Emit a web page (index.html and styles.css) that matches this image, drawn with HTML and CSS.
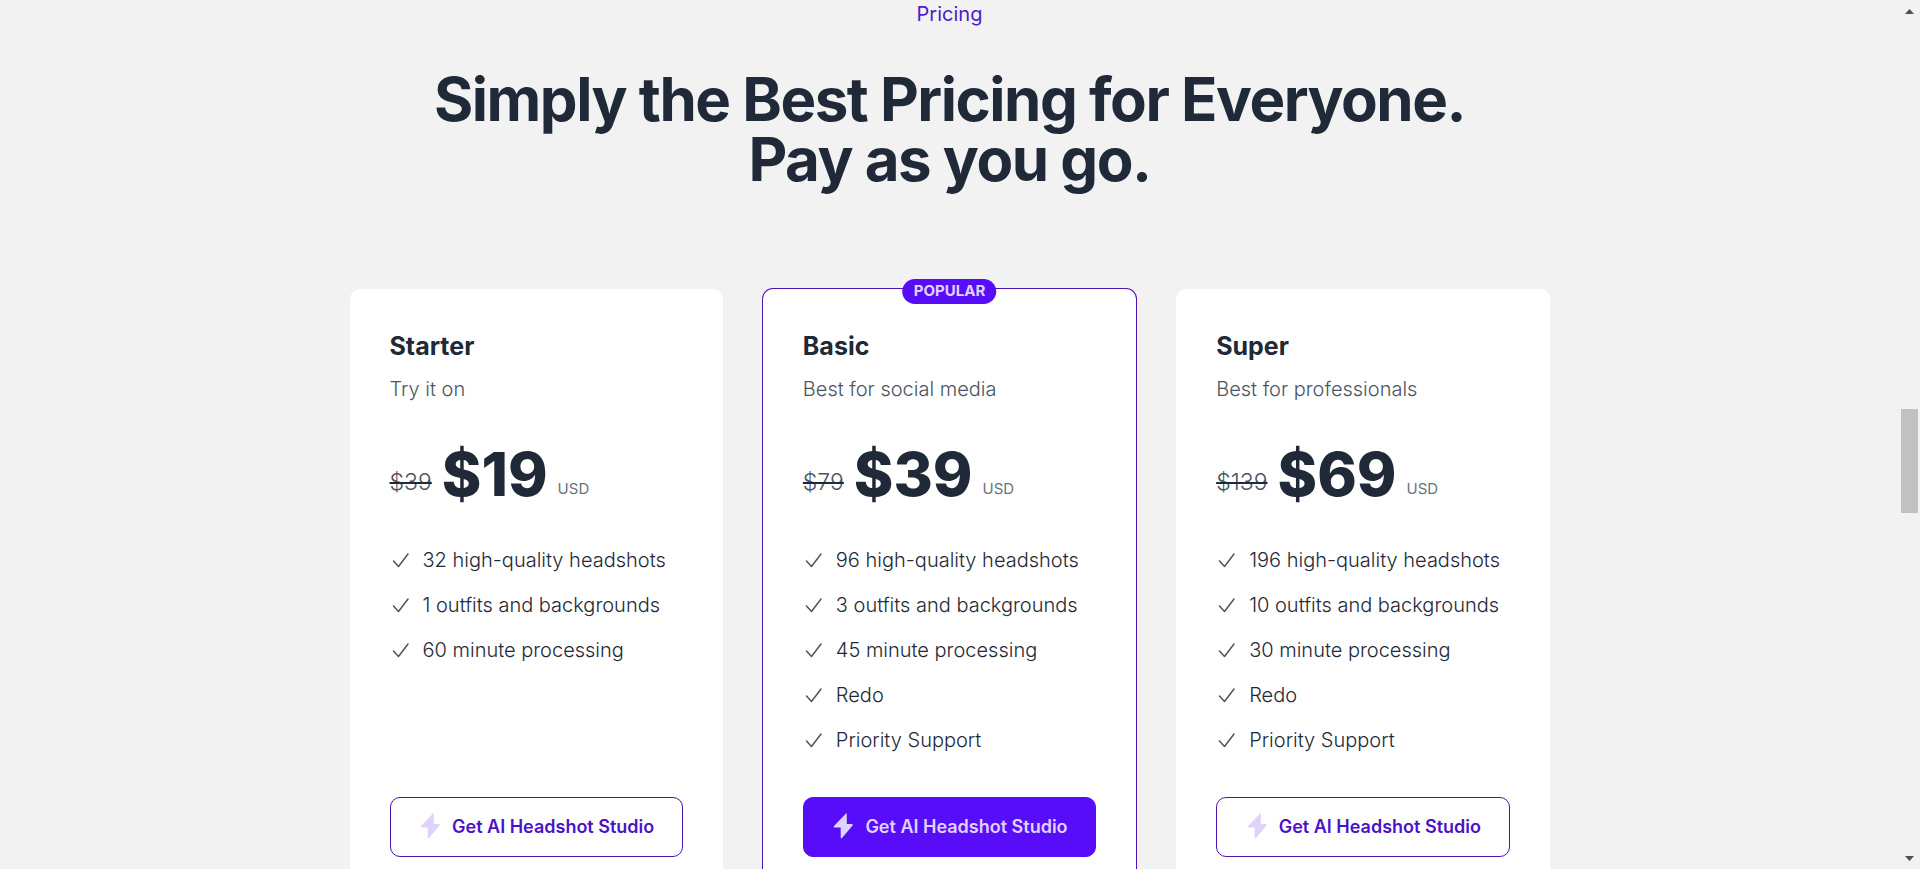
FILE: index.html
```
<!DOCTYPE html>
<html lang="en">
<head>
  <meta charset="UTF-8" />
  <meta name="viewport" content="width=device-width, initial-scale=1.0" />
  <title>Pricing</title>
  <link rel="stylesheet" href="styles.css">
</head>
<body>
  <svg class="sprite" aria-hidden="true">
    <symbol id="check" viewBox="0 0 22 22">
      <path d="M3.5 12 L8.5 17.5 L18 5" fill="none" stroke="currentColor" stroke-width="1.5" stroke-linecap="round" stroke-linejoin="round" />
    </symbol>
    <symbol id="bolt" viewBox="0 0 24 26">
      <path d="M15 0.5 L3 13 Q2 14.5 4 14.5 H9.7 V24.5 Q9.8 26 11 25 L21.6 12.6 Q22 11 21 11 H15.8 L15.8 1 Q15.8 0 15 0.5 Z" fill="currentColor" />
    </symbol>
  </svg>

  <main class="pricing">
    <p class="eyebrow">Pricing</p>
    <h1>Simply the Best Pricing for Everyone.<br>Pay as you go.</h1>

    <div class="plans">
      <section class="card">
        <h2>Starter</h2>
        <p class="tagline">Try it on</p>
        <div class="price">
          <s class="old"><span>$39</span></s>
          <span class="amount">$19</span>
          <span class="currency">USD</span>
        </div>
        <ul class="features">
          <li><svg class="check"><use href="#check" /></svg>32 high-quality headshots</li>
          <li><svg class="check"><use href="#check" /></svg>1 outfits and backgrounds</li>
          <li><svg class="check"><use href="#check" /></svg>60 minute processing</li>
        </ul>
        <button class="btn" type="button"><svg class="bolt"><use href="#bolt" /></svg>Get AI Headshot Studio</button>
      </section>

      <section class="card popular">
        <span class="badge">POPULAR</span>
        <h2>Basic</h2>
        <p class="tagline">Best for social media</p>
        <div class="price">
          <s class="old"><span>$79</span></s>
          <span class="amount">$39</span>
          <span class="currency">USD</span>
        </div>
        <ul class="features">
          <li><svg class="check"><use href="#check" /></svg>96 high-quality headshots</li>
          <li><svg class="check"><use href="#check" /></svg>3 outfits and backgrounds</li>
          <li><svg class="check"><use href="#check" /></svg>45 minute processing</li>
          <li><svg class="check"><use href="#check" /></svg>Redo</li>
          <li><svg class="check"><use href="#check" /></svg>Priority Support</li>
        </ul>
        <button class="btn btn-primary" type="button"><svg class="bolt"><use href="#bolt" /></svg>Get AI Headshot Studio</button>
      </section>

      <section class="card">
        <h2>Super</h2>
        <p class="tagline">Best for professionals</p>
        <div class="price">
          <s class="old"><span>$139</span></s>
          <span class="amount">$69</span>
          <span class="currency">USD</span>
        </div>
        <ul class="features">
          <li><svg class="check"><use href="#check" /></svg>196 high-quality headshots</li>
          <li><svg class="check"><use href="#check" /></svg>10 outfits and backgrounds</li>
          <li><svg class="check"><use href="#check" /></svg>30 minute processing</li>
          <li><svg class="check"><use href="#check" /></svg>Redo</li>
          <li><svg class="check"><use href="#check" /></svg>Priority Support</li>
        </ul>
        <button class="btn" type="button"><svg class="bolt"><use href="#bolt" /></svg>Get AI Headshot Studio</button>
      </section>
    </div>
  </main>

  <div class="scrollbar" aria-hidden="true">
    <svg class="arrow" viewBox="0 0 9 5"><path d="M4.5 0 L9 5 H0 Z" /></svg>
    <div class="track"><div class="thumb"></div></div>
    <svg class="arrow" viewBox="0 0 9 5"><path d="M0 0 H9 L4.5 5 Z" /></svg>
  </div>
</body>
</html>
```
FILE: styles.css
```
* {
  box-sizing: border-box;
}
body {
  margin: 0;
  height: 100vh;
  display: flex;
  overflow: hidden;
  background: #f2f2f2;
  color: #1f2937;
  font-family: Inter, sans-serif;
  font-size: 20px;
  line-height: 28px;
}
h1, h2, p, ul {
  margin: 0;
  padding: 0;
}
.sprite {
  display: none;
}
.pricing {
  flex: 1;
}
.eyebrow {
  text-align: center;
  color: #4c1bc9;
}
h1 {
  margin-top: 41px;
  text-align: center;
  font-size: 60px;
  line-height: 60px;
  font-weight: 700;
  letter-spacing: -0.025em;
}
.plans {
  display: grid;
  grid-template-columns: repeat(3, 1fr);
  gap: 40px;
  max-width: 1200px;
  margin: 100px auto 0;
}
.card {
  position: relative;
  display: flex;
  flex-direction: column;
  padding: 40px;
  background: #fff;
  border-radius: 10px;
}
.popular {
  box-shadow: 0 0 0 1px #4c14b0;
}
.badge {
  position: absolute;
  top: -10px;
  left: 50%;
  transform: translateX(-50%);
  padding: 0 11px 1px;
  border-radius: 16px;
  background: #570df8;
  color: #e0d2fe;
  font-size: 15px;
  line-height: 24px;
  font-weight: 700;
}
h2 {
  font-size: 25px;
  line-height: 34px;
  font-weight: 700;
}
.tagline {
  margin-top: 12px;
  color: #4b5563;
  font-weight: 300;
}
.price {
  display: flex;
  align-items: flex-end;
  margin-top: 41px;
}
.old {
  margin-bottom: 6px;
  font-size: 23px;
  line-height: 32px;
  font-weight: 300;
}
.old span {
  color: #4b5563;
}
.amount {
  margin: 0 10px;
  font-size: 60px;
  line-height: 60px;
  font-weight: 800;
}
.currency {
  margin-bottom: 3px;
  color: #6b7280;
  font-size: 15px;
  line-height: 24px;
}
.features {
  flex: 1;
  display: flex;
  flex-direction: column;
  gap: 17px;
  margin-top: 42px;
  list-style: none;
  font-weight: 300;
}
.features li {
  display: flex;
  align-items: center;
  gap: 11px;
}
.check {
  width: 22px;
  height: 22px;
  color: #4b5563;
}
.btn {
  display: flex;
  align-items: center;
  justify-content: center;
  gap: 10px;
  height: 60px;
  margin-top: 43px;
  padding: 0 0 2px;
  border: 1px solid #4c14b0;
  border-radius: 10px;
  background: none;
  color: #4c12cb;
  font-family: inherit;
  font-size: 18px;
  font-weight: 600;
}
.btn-primary {
  background: #570df8;
  border-color: #570df8;
  color: #e0d2fe;
}
.bolt {
  width: 24px;
  height: 26px;
  color: #e0d2fe;
}
.scrollbar {
  width: 21px;
  display: flex;
  flex-direction: column;
  align-items: center;
  padding: 9px 0 8px;
}
.arrow {
  width: 9px;
  height: 5px;
  fill: #505050;
}
.track {
  flex: 1;
  padding-top: 395px;
}
.thumb {
  width: 17px;
  height: 104px;
  background: #c1c1c1;
}
```
